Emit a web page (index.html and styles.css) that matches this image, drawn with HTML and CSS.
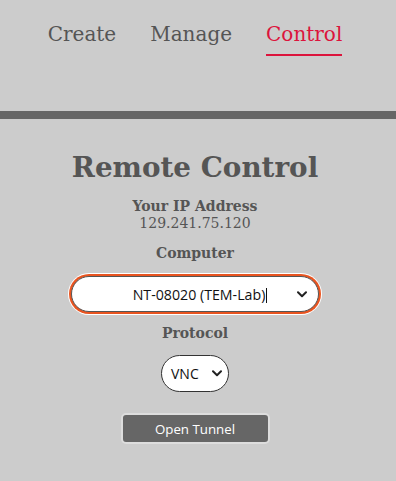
FILE: index.html
```html
<!DOCTYPE html>
<html lang="en">
<head>
<meta charset="utf-8">
<title>Remote Control</title>
<link rel="stylesheet" href="styles.css">
</head>
<body>
<header class="top">
  <nav class="nav">
    <a class="nav-link" href="#">Create</a>
    <a class="nav-link" href="#">Manage</a>
    <a class="nav-link active" href="#">Control</a>
  </nav>
</header>
<div class="divider"></div>
<main class="panel">
  <h1 class="title">Remote Control</h1>
  <div class="label label-ip">Your IP Address</div>
  <div class="ip">129.241.75.120</div>
  <div class="label label-computer">Computer</div>
  <div class="select wide">
    <span class="select-text">NT-08020 (TEM-Lab)<span class="caret"></span></span>
    <svg class="chev" width="10" height="7" viewBox="0 0 10 7"><path d="M1 1.2 L5 5.2 L9 1.2" fill="none" stroke="#222" stroke-width="2" stroke-linecap="round" stroke-linejoin="round"/></svg>
  </div>
  <div class="label label-protocol">Protocol</div>
  <div class="select small">
    <span class="select-text">VNC</span>
    <svg class="chev" width="10" height="7" viewBox="0 0 10 7"><path d="M1 1.2 L5 5.2 L9 1.2" fill="none" stroke="#222" stroke-width="2" stroke-linecap="round" stroke-linejoin="round"/></svg>
  </div>
  <button class="btn" type="button">Open Tunnel</button>
</main>
</body>
</html>
```
FILE: styles.css
```css
html, body {
  margin: 0;
  padding: 0;
  background: #cccccc;
}
body {
  font-family: "DejaVu Serif", serif;
  color: #555555;
}
.top {
  height: 111px;
  padding-right: 6px;
}
.nav {
  display: flex;
  justify-content: center;
  gap: 34px;
  padding-top: 21px;
}
.nav-link {
  font-size: 20px;
  line-height: 26px;
  color: #555555;
  text-decoration: none;
  padding-bottom: 7px;
  border-bottom: 2px solid transparent;
}
.nav-link.active {
  color: #dc143c;
  border-bottom-color: #dc143c;
}
.divider {
  height: 8px;
  background: #666666;
}
.panel {
  display: flex;
  flex-direction: column;
  align-items: center;
  padding-right: 6px;
  padding-top: 32px;
}
.title {
  margin: 0;
  font-size: 27.8px;
  line-height: 34px;
  font-weight: bold;
  color: #555555;
}
.label {
  font-weight: bold;
  font-size: 14px;
  line-height: 17px;
}
.label-ip { margin-top: 13px; }
.label-computer { margin-top: 13px; }
.label-protocol { margin-top: 13px; }
.ip {
  font-size: 14px;
  line-height: 17px;
}
.select {
  box-sizing: border-box;
  background: #ffffff;
  border: 1px solid #555555;
  display: flex;
  align-items: center;
  font-family: "Open Sans", sans-serif;
  color: #111111;
}
.select.wide {
  width: 248px;
  height: 36px;
  border-radius: 18px;
  margin-top: 14px;
  box-shadow: 0 0 0 2px #e95420, 0 0 0 3px #ffffff;
  font-size: 14.2px;
  padding: 0 11px 0 31px;
}
.select.wide .select-text {
  flex: 1;
  text-align: center;
}
.caret {
  display: inline-block;
  width: 1px;
  height: 15px;
  background: #111111;
  vertical-align: -3px;
  margin-left: 1px;
}
.select.small {
  width: 68px;
  height: 37px;
  border-radius: 19px;
  margin-top: 13px;
  font-size: 14px;
  padding: 0 6px 0 9px;
  border-color: #333333;
}
.select.small .select-text {
  flex: 1;
}
.chev {
  flex: none;
}
.btn {
  margin-top: 21px;
  width: 149px;
  height: 31px;
  background: #666666;
  border: 2px solid #dddddd;
  border-radius: 5px;
  color: #ffffff;
  font-family: "Open Sans", sans-serif;
  font-size: 13.3px;
  padding: 0;
}
```
